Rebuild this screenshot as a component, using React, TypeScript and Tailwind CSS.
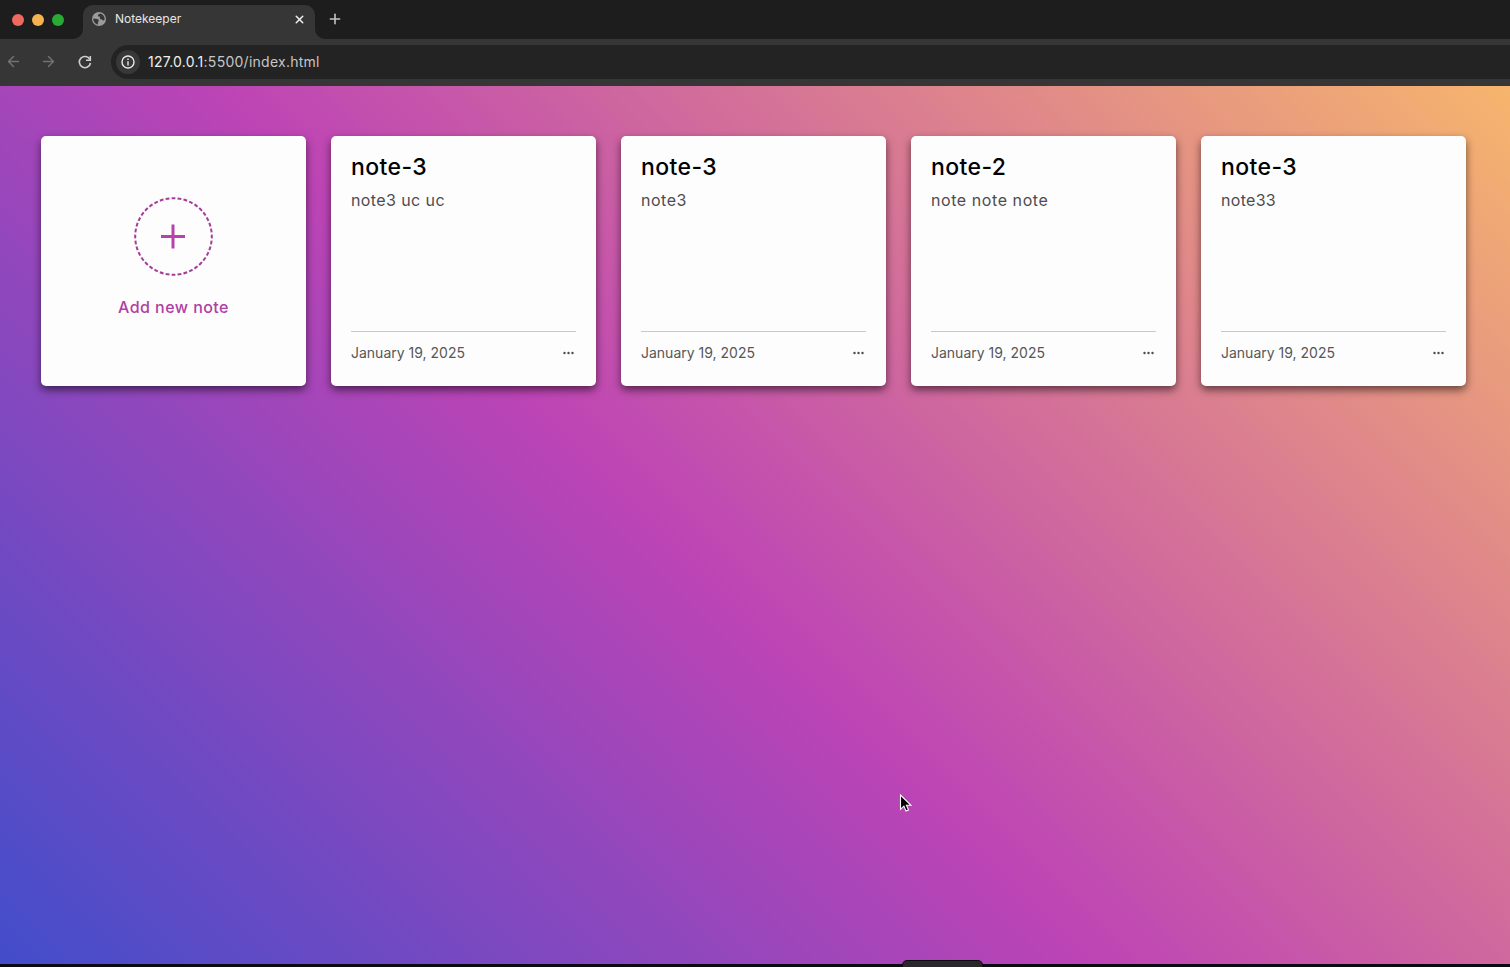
import { ArrowLeft, ArrowRight, Plus, X } from "lucide-react";

type Note = { title: string; body: string; date: string; bodyTracking: string };

const notes: Note[] = [
  { title: "note-3", body: "note3 uc uc", date: "January 19, 2025", bodyTracking: "tracking-[0.4px]" },
  { title: "note-3", body: "note3", date: "January 19, 2025", bodyTracking: "tracking-[0.5px]" },
  { title: "note-2", body: "note note note", date: "January 19, 2025", bodyTracking: "tracking-[0.57px]" },
  { title: "note-3", body: "note33", date: "January 19, 2025", bodyTracking: "tracking-[0.3px]" },
];

const cardClass =
  "h-[250px] w-[265px] shrink-0 rounded-[5px] bg-[#fdfdfd] shadow-[0_4px_8px_rgba(0,0,0,0.55)]";

function GlobeIcon() {
  return (
    <svg width="14" height="14" viewBox="0 0 14 14" className="shrink-0">
      <circle cx="7" cy="7" r="7" fill="#9b9b9b" />
      <path d="M1.300 6.400 5 7c1.200.2 1.800.8 1.700 1.900 0 .7-.8 1-.8 1.700v1.800C3.200 12 1.200 9.700 1.300 6.400Z" fill="#363636" />
      <path d="M8.300 1.500C7 2 6 2.600 5.900 3.500c0 .8.600 1 1.400 1 .8 0 .8.800.6 1.500-.2.800.500 1.300 1.500 1.300.9 0 .8 1.300 1.800 1.300.8 0 1.300-.7 1.400-1.600C12.600 4.300 10.900 2.100 8.300 1.500Z" fill="#363636" />
    </svg>
  );
}

function TabBar() {
  return (
    <div className="flex h-[39px] bg-[#1d1d1d]">
      <div className="flex w-[83px] items-center gap-2 pl-3">
        <span className="size-3 rounded-full bg-[#ee6a5e]" />
        <span className="size-3 rounded-full bg-[#f5b350]" />
        <span className="size-3 rounded-full bg-[#28aa35]" />
      </div>
      <div className="relative mt-[5px] flex h-[34px] w-[232px] items-center rounded-t-[10px] bg-[#363636] pb-[6px] pl-[9px] pr-[9px]">
        <svg width="10" height="10" viewBox="0 0 10 10" className="absolute bottom-0 -left-[10px]">
          <path d="M10 0v10H0A10 10 0 0 0 10 0Z" fill="#363636" />
        </svg>
        <svg width="10" height="10" viewBox="0 0 10 10" className="absolute bottom-0 -right-[10px]">
          <path d="M0 0v10h10A10 10 0 0 1 0 0Z" fill="#363636" />
        </svg>
        <GlobeIcon />
        <span className="ml-[9px] flex-1 text-[12px] text-[#e6e6e6]">Notekeeper</span>
        <X size={13} strokeWidth={2.8} className="text-[#ececec]" />
      </div>
      <div className="flex w-10 items-center justify-center pb-px">
        <Plus size={16} strokeWidth={2.4} className="text-[#c4c4c4]" />
      </div>
    </div>
  );
}

function AddressBar() {
  return (
    <div className="flex h-[47px] items-center bg-[#363636] pb-px">
      <div className="flex w-[111px] items-center pb-px pl-[5px]">
        <ArrowLeft size={17} strokeWidth={2.1} className="text-[#737173]" />
        <ArrowRight size={17} strokeWidth={2.1} className="ml-[18px] text-[#737173]" />
        <svg width="14" height="14" viewBox="0 0 14 14" fill="none" stroke="#cfcfcf" strokeWidth="1.600" className="ml-[21px]">
          <path d="M11.900 4.400A5.600 5.600 0 1 0 12.500 8" />
          <path d="M12.300 1v4.300H8" />
        </svg>
      </div>
      <div className="flex h-[34px] flex-1 items-center rounded-l-full bg-[#232323] pl-[5px]">
        <span className="flex size-6 items-center justify-center rounded-full bg-[#383838]">
          <svg width="14" height="14" viewBox="0 0 14 14" fill="none" stroke="#e8e8e8" strokeWidth="1.400">
            <circle cx="7" cy="7" r="6" />
            <path d="M7 6.200v4.200M7 3.600v1.500" />
          </svg>
        </span>
        <span className="ml-2 pb-px text-[14px] tracking-[0.26px] text-[#c6c6c6]">
          <span className="text-[#efefef]">127.0.0.1</span>:5500/index.html
        </span>
      </div>
    </div>
  );
}

function AddCard() {
  return (
    <button className={`${cardClass} flex flex-col items-center pt-[61px] text-[#b040a4]`}>
      <svg width="79" height="79" viewBox="0 0 79 79" fill="none">
        <circle cx="39.500" cy="39.500" r="38.300" stroke="#a43e98" strokeWidth="2" pathLength="240" strokeDasharray="3.800 2.200" strokeDashoffset="1.900" />
        <path d="M37.500 27.500h3v10.500H51v3H40.500v10.500h-3V41H27v-3h10.500Z" fill="#b444ac" />
      </svg>
      <span className="mt-[19px] text-[16px] font-medium leading-6 tracking-[0.45px]">Add new note</span>
    </button>
  );
}

function NoteCard({ note }: { note: Note }) {
  return (
    <article className={`${cardClass} flex flex-col justify-between px-5 pb-5 pt-[15px]`}>
      <div>
        <h2 className="text-[23px] font-medium leading-[33px] tracking-[0.4px] text-black">{note.title}</h2>
        <p className={`mt-1 text-[16px] leading-6 text-[#4f4b4f] ${note.bodyTracking}`}>{note.body}</p>
      </div>
      <footer className="flex h-[35px] items-end justify-between border-t border-[#c8c8c8]">
        <span className="text-[14px] leading-[26px] text-[#575757]">{note.date}</span>
        <svg width="15" height="24" viewBox="0 0 15 24" fill="#4a4a4a">
          <circle cx="3.500" cy="11" r="1.200" />
          <circle cx="7.500" cy="11" r="1.200" />
          <circle cx="11.500" cy="11" r="1.200" />
        </svg>
      </footer>
    </article>
  );
}

export default function App() {
  return (
    <div className="relative flex h-[967px] w-[1510px] flex-col overflow-hidden bg-[#0b0911] font-['Inter',sans-serif]">
      <TabBar />
      <AddressBar />
      <main className="flex h-[878px] items-start gap-[25px] bg-[linear-gradient(45deg,#424dca_0%,#bd44b5_46%,#f6b56d_100%)] pl-[41px] pt-[50px]">
        <AddCard />
        {notes.map((note, i) => (
          <NoteCard key={i} note={note} />
        ))}
      </main>
      <div className="absolute left-[902px] top-[960px] h-3 w-[81px] rounded-t-[5px] border border-[#0b0911] bg-[#29272a]" />
      <svg width="13" height="19" viewBox="0 0 13 19" className="absolute left-[899px] top-[794px]">
        <path d="M1.500 1v14.300l3.400-3.200 2.100 5 2.500-1.100-2.100-4.800h4.400Z" fill="#000" stroke="#fff" strokeWidth="1.100" />
      </svg>
    </div>
  );
}
